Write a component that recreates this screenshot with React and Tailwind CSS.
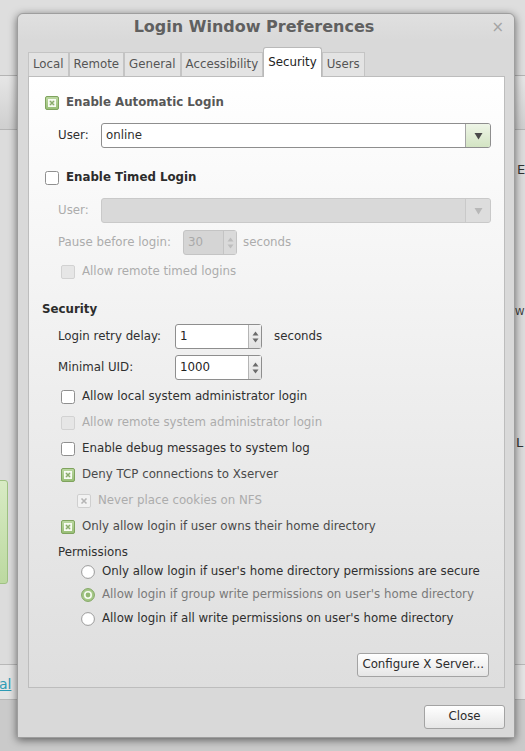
import React from "react";

const FONT = { fontFamily: '"DejaVu Sans", "Liberation Sans", sans-serif' };

function CheckBox({ checked, disabled }) {
  if (checked && disabled) {
    return (
      <svg width="14" height="14" viewBox="0 0 14 14" className="shrink-0">
        <rect x="0.5" y="0.5" width="13" height="13" rx="1.5" fill="#f2f2f2" stroke="#cfcfcf" />
        <path d="M4.5 4.5 L9.5 9.5 M9.5 4.5 L4.5 9.5" stroke="#b5b5b5" strokeWidth="1.6" />
      </svg>
    );
  }
  if (checked) {
    return (
      <svg width="14" height="14" viewBox="0 0 14 14" className="shrink-0">
        <defs>
          <linearGradient id="cg" x1="0" y1="0" x2="0" y2="1">
            <stop offset="0" stopColor="#bcd8a2" />
            <stop offset="1" stopColor="#98be76" />
          </linearGradient>
        </defs>
        <rect x="0.5" y="0.5" width="13" height="13" rx="1.5" fill="url(#cg)" stroke="#7fa35e" />
        <rect x="3.5" y="3.5" width="7" height="7" fill="#eef5e6" stroke="#f8fbf4" />
        <path d="M5 5 L9 9 M9 5 L5 9" stroke="#8aab6c" strokeWidth="1.5" />
      </svg>
    );
  }
  if (disabled) {
    return (
      <svg width="14" height="14" viewBox="0 0 14 14" className="shrink-0">
        <rect x="0.5" y="0.5" width="13" height="13" rx="1.5" fill="#e6e6e6" stroke="#d2d2d2" />
      </svg>
    );
  }
  return (
    <svg width="14" height="14" viewBox="0 0 14 14" className="shrink-0">
      <rect x="0.5" y="0.5" width="13" height="13" rx="2" fill="#ffffff" stroke="#8f8f8f" />
    </svg>
  );
}

function Radio({ checked }) {
  if (checked) {
    return (
      <svg width="14" height="14" viewBox="0 0 14 14" className="shrink-0">
        <circle cx="7" cy="7" r="6.4" fill="#a6c888" stroke="#82a663" />
        <circle cx="7" cy="7" r="4" fill="#f7fbf3" />
        <circle cx="7" cy="7" r="2.4" fill="#93b873" />
      </svg>
    );
  }
  return (
    <svg width="14" height="14" viewBox="0 0 14 14" className="shrink-0">
      <circle cx="7" cy="7" r="6.4" fill="#ffffff" stroke="#9a9a9a" />
    </svg>
  );
}

function Arrow({ color }) {
  return (
    <svg width="9" height="8" viewBox="0 0 9 8">
      <path d="M0.5 1 L8.5 1 L4.5 7.5 Z" fill={color} />
    </svg>
  );
}

function Combo({ value, disabled }) {
  return (
    <div
      className={`flex h-[25px] flex-1 items-stretch rounded-[3px] border ${
        disabled ? "border-[#c9c9c9] bg-[#d9d9d9]" : "border-[#8e8e8e] bg-white"
      }`}
    >
      <div className={`flex flex-1 items-center pl-[4px] ${disabled ? "" : "text-[#2e2e2e]"}`}>{value}</div>
      <div
        className={`flex w-[25px] items-center justify-center rounded-r-[2px] border-l ${
          disabled
            ? "border-[#c9c9c9] bg-[#dddddd]"
            : "border-[#a5a5a5] bg-gradient-to-b from-[#eef5e7] to-[#d3e4c3]"
        }`}
      >
        <Arrow color={disabled ? "#b8b8b8" : "#4a4a4a"} />
      </div>
    </div>
  );
}

function Spin({ value, disabled, w }) {
  return (
    <div
      className={`flex h-[25px] items-stretch rounded-[3px] border ${w} ${
        disabled ? "border-[#c4c4c4] bg-[#d5d5d5]" : "border-[#8e8e8e] bg-white"
      }`}
    >
      <div className={`flex flex-1 items-center pl-[4px] ${disabled ? "text-[#a9a9a9]" : "text-[#222]"}`}>{value}</div>
      <div
        className={`flex w-[13px] flex-col items-center justify-center gap-[2px] border-l ${
          disabled ? "border-[#c4c4c4] bg-[#dadada]" : "border-[#b5b5b5] bg-gradient-to-b from-[#f4f4f4] to-[#e1e1e1]"
        }`}
      >
        <svg width="7" height="5" viewBox="0 0 7 5">
          <path d="M0.5 4.5 L3.5 0.5 L6.5 4.5 Z" fill={disabled ? "#bdbdbd" : "#6a6a6a"} />
        </svg>
        <svg width="7" height="5" viewBox="0 0 7 5">
          <path d="M0.5 0.5 L6.5 0.5 L3.5 4.5 Z" fill={disabled ? "#bdbdbd" : "#6a6a6a"} />
        </svg>
      </div>
    </div>
  );
}

function CheckRow({ checked, disabled, label, indent, color }) {
  return (
    <div className={`flex h-[26px] items-center gap-[7px] ${indent}`}>
      <CheckBox checked={checked} disabled={disabled} />
      <span className={disabled ? "text-[#acacac]" : color || "text-[#2f2f2f]"}>{label}</span>
    </div>
  );
}

function RadioRow({ checked, label }) {
  return (
    <div className="ml-[39px] flex h-[23.5px] items-center gap-[7px]">
      <Radio checked={checked} />
      <span className={checked ? "text-[#7a7a7a]" : "text-[#2f2f2f]"}>{label}</span>
    </div>
  );
}

function Tab({ label, active }) {
  if (active) {
    return (
      <div className="relative z-10 -mb-px flex h-[30px] items-center rounded-t-[3px] border border-b-0 border-[#b9b9b9] bg-white px-[4px] text-[#222]">
        {label}
      </div>
    );
  }
  return (
    <div className="flex h-[24px] items-center border border-b-0 border-[#c4c4c4] bg-[#e3e3e3] px-[4px] text-[#555]">
      {label}
    </div>
  );
}

export default function App() {
  return (
    <div className="relative h-[751px] w-[525px] overflow-hidden bg-[#d6d6d6] text-[11.8px]" style={FONT}>
      {/* desktop background behind the dialog */}
      <div className="absolute left-0 top-0 h-[75px] w-full bg-[#dedede]" />
      <div className="absolute left-0 top-[75px] h-[55px] w-full border-y border-[#b4b4b4] bg-gradient-to-b from-[#e6e6e6] to-[#cfcfcf]" />
      <div className="absolute left-0 top-[130px] h-[534px] w-full bg-[#dcdcdc]" />
      <div className="absolute left-[-4px] top-[480px] h-[104px] w-[12px] rounded-[3px] border border-[#9fc283] bg-gradient-to-b from-[#d8ebc4] to-[#bcd9a0]" />
      <div className="absolute left-0 top-[664px] h-[36px] w-full border-y border-[#b8b8b8] bg-[#e4e4e4]" />
      <div className="absolute left-[-1px] top-[674px] text-[14px] text-[#2d9bb5] underline">al</div>
      <div className="absolute left-0 top-[700px] h-[51px] w-full bg-[#cacaca]" />
      <div className="absolute left-[517px] top-[163px] text-[13px] leading-none text-[#333]">E</div>
      <div className="absolute left-[515px] top-[307px] text-[9.5px] leading-none text-[#333]">W</div>
      <div className="absolute left-[516px] top-[436px] text-[13px] leading-none text-[#333]">L</div>

      {/* dialog window */}
      <div className="absolute left-[17px] top-[13px] flex h-[725px] w-[498px] flex-col rounded-t-[6px] border border-[#9e9e9e] bg-[#d9d9d9] shadow-[0_2px_8px_rgba(0,0,0,0.55)]">
        {/* title bar */}
        <div className="relative flex h-[26px] items-center justify-center rounded-t-[6px] bg-gradient-to-b from-[#e0e0e0] to-[#d9d9d9] pr-[24px]">
          <span className="text-[16px] font-bold text-[#606060]">Login Window Preferences</span>
          <span className="absolute right-[10px] top-[2px] text-[15px] text-[#a4a4a4]">×</span>
        </div>

        {/* tabs */}
        <div className="ml-[10px] mt-[7px] flex items-end">
          <Tab label="Local" />
          <Tab label="Remote" />
          <Tab label="General" />
          <Tab label="Accessibility" />
          <Tab label="Security" active />
          <Tab label="Users" />
        </div>

        {/* notebook page */}
        <div className="ml-[10px] mr-[9px] flex h-[612px] flex-col border border-[#bdbdbd] bg-gradient-to-b from-[#ffffff] to-[#dedede] pl-[13px] pr-[13px] pt-[16px]">
          <div className="ml-[3px] flex h-[20px] items-center gap-[7px]">
            <CheckBox checked />
            <span className="font-bold text-[#575757]">Enable Automatic Login</span>
          </div>
          <div className="ml-[16px] mt-[10px] flex items-center">
            <span className="w-[43px] text-[#2f2f2f]">User:</span>
            <Combo value="online" />
          </div>

          <div className="ml-[3px] mt-[20px] flex h-[20px] items-center gap-[7px]">
            <CheckBox />
            <span className="font-bold text-[#2c2c2c]">Enable Timed Login</span>
          </div>
          <div className="ml-[16px] mt-[10px] flex items-center">
            <span className="w-[43px] text-[#acacac]">User:</span>
            <Combo value="" disabled />
          </div>
          <div className="ml-[16px] mt-[7px] flex items-center">
            <span className="w-[125px] text-[#acacac]">Pause before login:</span>
            <Spin value="30" disabled w="w-[54px]" />
            <span className="ml-[6px] text-[#acacac]">seconds</span>
          </div>
          <div className="ml-[19px] mt-[4px] flex h-[26px] items-center gap-[7px]">
            <CheckBox disabled />
            <span className="text-[#acacac]">Allow remote timed logins</span>
          </div>

          <div className="mt-[15px] flex h-[20px] items-center font-bold text-[#2c2c2c]">Security</div>
          <div className="ml-[16px] mt-[4px] flex items-center">
            <span className="w-[117px] text-[#2f2f2f]">Login retry delay:</span>
            <Spin value="1" w="w-[87px]" />
            <span className="ml-[12px] text-[#2f2f2f]">seconds</span>
          </div>
          <div className="ml-[16px] mt-[6px] flex items-center">
            <span className="w-[117px] text-[#2f2f2f]">Minimal UID:</span>
            <Spin value="1000" w="w-[87px]" />
          </div>

          <div className="mt-[4px] flex flex-col">
            <CheckRow indent="ml-[19px]" label="Allow local system administrator login" />
            <CheckRow indent="ml-[19px]" disabled label="Allow remote system administrator login" />
            <CheckRow indent="ml-[19px]" label="Enable debug messages to system log" />
            <CheckRow indent="ml-[19px]" checked color="text-[#4a4a4a]" label="Deny TCP connections to Xserver" />
            <CheckRow indent="ml-[35px]" checked disabled label="Never place cookies on NFS" />
            <CheckRow indent="ml-[19px]" checked color="text-[#4a4a4a]" label="Only allow login if user owns their home directory" />
            <div className="ml-[16px] flex h-[26px] items-center text-[#2f2f2f]">Permissions</div>
            <div className="-mt-[6px] flex flex-col">
              <RadioRow label="Only allow login if user's home directory permissions are secure" />
              <RadioRow checked label="Allow login if group write permissions on user's home directory" />
              <RadioRow label="Allow login if all write permissions on user's home directory" />
            </div>
          </div>

          <div className="mt-[22px] flex justify-end pr-[2px]">
            <button className="flex h-[24px] items-center rounded-[3px] border border-[#a3a3a3] bg-gradient-to-b from-[#ffffff] to-[#e6e6e6] px-[4px] text-[#2c2c2c]">
              Configure X Server...
            </button>
          </div>
        </div>

        <div className="mr-[9px] mt-[17px] flex justify-end">
          <button className="flex h-[24px] w-[81px] items-center justify-center rounded-[3px] border border-[#a3a3a3] bg-gradient-to-b from-[#ffffff] to-[#e6e6e6] text-[#2c2c2c]">
            Close
          </button>
        </div>
      </div>
    </div>
  );
}
